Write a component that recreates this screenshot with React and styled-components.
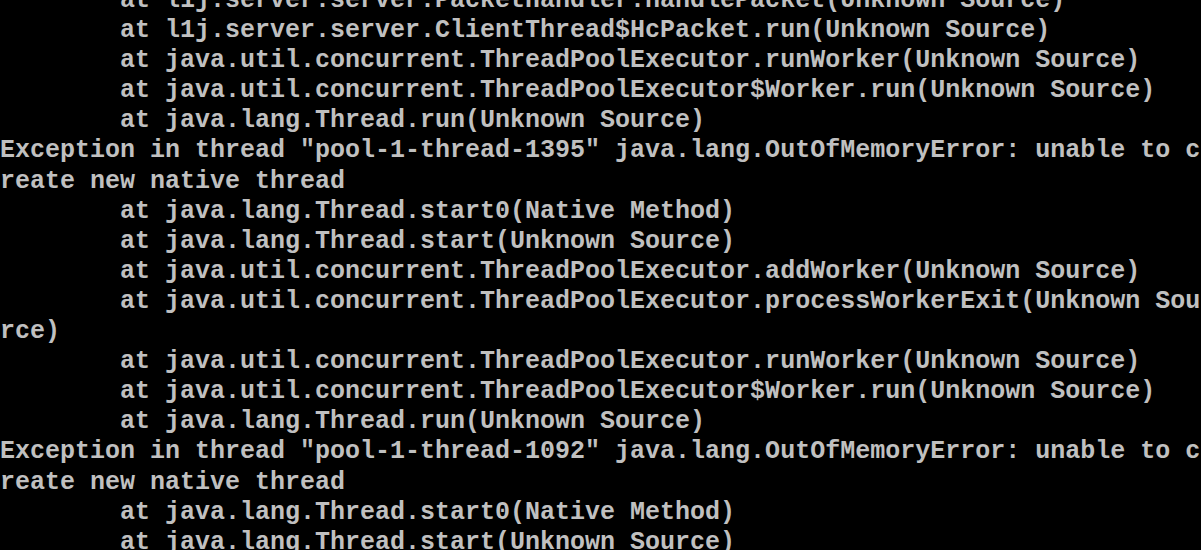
import React from "react";
import styled, { createGlobalStyle } from "styled-components";

const Global = createGlobalStyle`
  html, body { margin: 0; padding: 0; background: #000; }
  body { overflow: hidden; }
`;

const Console = styled.div`
  width: 1201px;
  height: 550px;
  background: #000;
  overflow: hidden;
`;

const Output = styled.pre`
  margin: -14px 0 0 0;
  padding: 0;
  font-family: "Liberation Mono", "DejaVu Sans Mono", monospace;
  font-weight: bold;
  font-size: 25px;
  line-height: 30.1px;
  letter-spacing: 0;
  color: #c0c0c0;
  white-space: pre;
`;

const Line = styled.div`
  height: 30.1px;
`;

const lines = [
  "        at l1j.server.server.PacketHandler.handlePacket(Unknown Source)",
  "        at l1j.server.server.ClientThread$HcPacket.run(Unknown Source)",
  "        at java.util.concurrent.ThreadPoolExecutor.runWorker(Unknown Source)",
  "        at java.util.concurrent.ThreadPoolExecutor$Worker.run(Unknown Source)",
  "        at java.lang.Thread.run(Unknown Source)",
  'Exception in thread "pool-1-thread-1395" java.lang.OutOfMemoryError: unable to c',
  "reate new native thread",
  "        at java.lang.Thread.start0(Native Method)",
  "        at java.lang.Thread.start(Unknown Source)",
  "        at java.util.concurrent.ThreadPoolExecutor.addWorker(Unknown Source)",
  "        at java.util.concurrent.ThreadPoolExecutor.processWorkerExit(Unknown Sou",
  "rce)",
  "        at java.util.concurrent.ThreadPoolExecutor.runWorker(Unknown Source)",
  "        at java.util.concurrent.ThreadPoolExecutor$Worker.run(Unknown Source)",
  "        at java.lang.Thread.run(Unknown Source)",
  'Exception in thread "pool-1-thread-1092" java.lang.OutOfMemoryError: unable to c',
  "reate new native thread",
  "        at java.lang.Thread.start0(Native Method)",
  "        at java.lang.Thread.start(Unknown Source)",
];

export default function App() {
  return (
    <>
      <Global />
      <Console>
        <Output>
          {lines.map((l, i) => (
            <Line key={i}>{l}</Line>
          ))}
        </Output>
      </Console>
    </>
  );
}
